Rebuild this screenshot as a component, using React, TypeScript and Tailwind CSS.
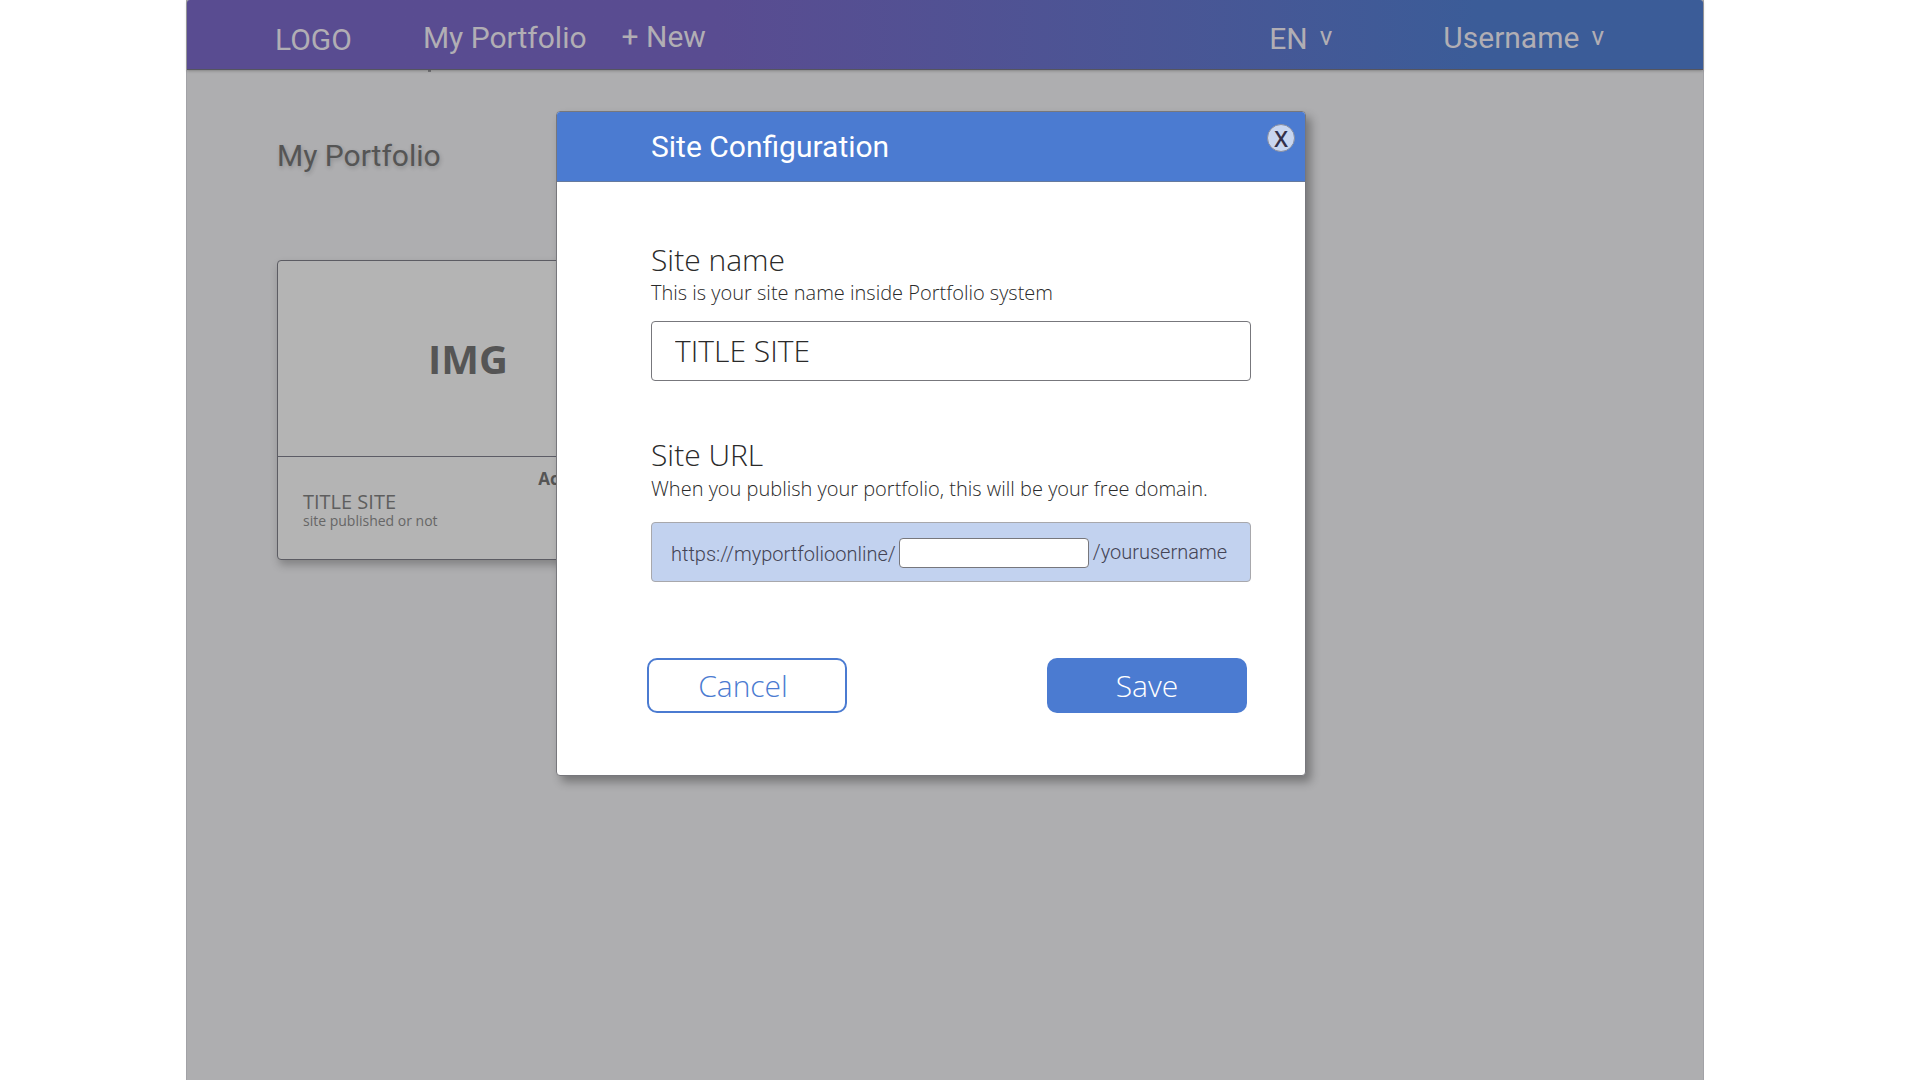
import { ChangeEvent, useState } from "react";

const roboto = "font-['Roboto',sans-serif]";
const openSans = "font-['Open_Sans',sans-serif]";

function Navbar() {
  return (
    <header
      className={`${roboto} relative z-10 flex h-[70px] shrink-0 items-center rounded-t-[3px] border-b border-[#55555f] bg-gradient-to-r from-[#594c91] from-35% to-[#3b5c98] to-85% text-[#b1aeb4] shadow-[0_1px_3px_rgba(0,0,0,0.25)]`}
    >
      <span className="ml-[88px] mt-[11px] text-[30px] leading-none">LOGO</span>
      <span className="ml-[71px] mt-[7px] text-[30px] leading-none">My Portfolio</span>
      <span className="ml-[35px] mt-[4px] text-[30px] leading-none">+ New</span>
      <span className="ml-auto mt-[9px] text-[30px] leading-none">EN</span>
      <span className="ml-[12px] mt-[3px] text-[26px] leading-none">v</span>
      <span className="ml-[111px] mt-[7px] text-[30px] leading-none">Username</span>
      <span className="ml-[12px] mr-[99px] mt-[3px] text-[26px] leading-none">v</span>
    </header>
  );
}

function SiteCard() {
  return (
    <div className="mt-[84px] h-[300px] w-[382px] rounded-[4px] border border-[#5c5c63] bg-[#b4b4b4] shadow-[2px_5px_8px_rgba(0,0,0,0.25)]">
      <div className="flex h-[196px] items-center justify-center border-b border-[#5c5c66]">
        <span className={`${openSans} text-[40px] font-bold text-[#555555]`}>IMG</span>
      </div>
      <div className={`${openSans} flex justify-between pl-[25px] pr-[67px]`}>
        <div className="pt-[35px]">
          <p className="text-[20px] leading-[20px] text-[#5e5e5e]">TITLE SITE</p>
          <p className="text-[14px] leading-[17px] text-[#666666]">site published or not</p>
        </div>
        <span className="pt-[9px] text-[17px] font-bold text-[#555555]">Active</span>
      </div>
    </div>
  );
}

function ConfigModal() {
  const [siteName, setSiteName] = useState("TITLE SITE");
  const [slug, setSlug] = useState("");

  return (
    <div className="absolute left-[369px] top-[111px] z-20 h-[665px] w-[750px] rounded-[4px] border border-[#77777c] bg-white shadow-[5px_6px_10px_rgba(0,0,0,0.32)]">
      <div className="relative flex h-[70px] items-center rounded-t-[3px] border-b border-[#667a9e] bg-[#4b7bd1] pl-[94px]">
        <h2 className={`${roboto} -mt-[1px] text-[30px] text-white`}>Site Configuration</h2>
        <button
          className={`${openSans} absolute right-[10px] top-[12px] flex h-[28px] w-[28px] items-center justify-center rounded-full border border-[#8a8fa0] bg-[#c8d6f0] text-[22px] font-semibold leading-none text-[#33304a]`}
        >
          X
        </button>
      </div>

      <div className={`${openSans} pl-[94px] pr-[54px] font-light text-[#2a2a2a]`}>
        <p className="mt-[60px] text-[30px] leading-[36px]">Site name</p>
        <p className="mt-[2px] text-[20px] leading-[26px]">This is your site name inside Portfolio system</p>
        <input
          value={siteName}
          onChange={(e: ChangeEvent<HTMLInputElement>) => setSiteName(e.target.value)}
          className="mt-[15px] h-[60px] w-full rounded-[4px] border border-[#77777c] px-[23px] pb-[1px] text-[30px] font-light text-[#2a2a2a] outline-none"
        />

        <p className="mt-[56px] text-[30px] leading-[36px]">Site URL</p>
        <p className="mt-[3px] text-[20px] leading-[26px]">When you publish your portfolio, this will be your free domain.</p>
        <div
          className={`${roboto} mt-[20px] flex h-[60px] items-center rounded-[4px] border border-[#a8a8ac] bg-[#c2d2ef] pl-[19px] text-[20px] font-light text-[#444455]`}
        >
          <span className="mt-[3px]">https://myportfolioonline/</span>
          <input
            value={slug}
            onChange={(e: ChangeEvent<HTMLInputElement>) => setSlug(e.target.value)}
            className="ml-[3px] mt-[1px] h-[30px] w-[190px] rounded-[4px] border border-[#77777c] bg-white outline-none"
          />
          <span className="ml-[4px]">/yourusername</span>
        </div>

        <div className="-ml-[4px] mr-[4px] mt-[76px] flex justify-between">
          <button className="h-[55px] w-[200px] rounded-[10px] border-2 border-[#4b7bd1] bg-white pr-[8px] text-[30px] font-light text-[#4b7bd1]">
            Cancel
          </button>
          <button className="h-[55px] w-[200px] rounded-[10px] bg-[#4b7bd1] text-[30px] font-light text-white">
            Save
          </button>
        </div>
      </div>
    </div>
  );
}

export default function App() {
  return (
    <div className="h-[1080px] overflow-hidden bg-white">
      <div className="relative ml-[186px] flex h-[1080px] w-[1518px] flex-col border-x border-[#a2a2a6] bg-[#aeaeb0]">
        <Navbar />
        <main className="flex flex-col pl-[90px]">
          {/* speck left under the navbar */}
          <div className="ml-[151px] h-[2px] w-[3px] bg-[#77777a]" />
          <h1
            className={`${roboto} mt-[64px] text-[30px] leading-[40px] text-[#555555] [text-shadow:1px_2px_4px_rgba(0,0,0,0.2)]`}
          >
            My Portfolio
          </h1>
          <SiteCard />
        </main>
        <ConfigModal />
      </div>
    </div>
  );
}
